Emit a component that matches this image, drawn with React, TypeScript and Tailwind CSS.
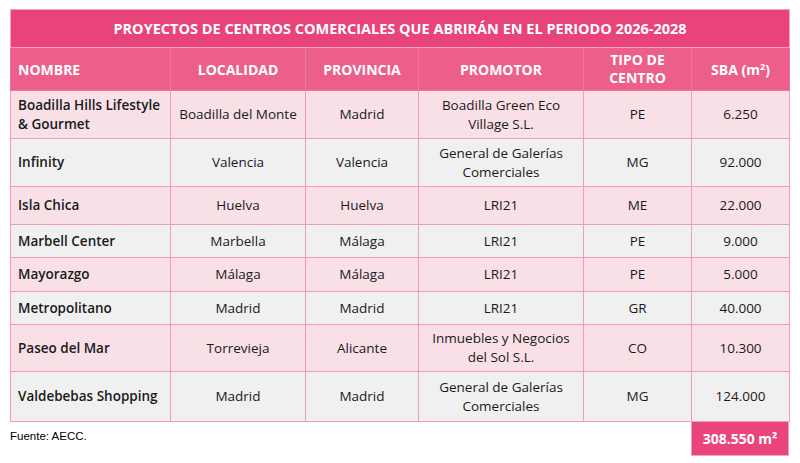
import React from "react";

const rows: { n: React.ReactNode; l: string; p: string; pr: React.ReactNode; t: string; s: string; h: string }[] = [
  { n: <>Boadilla Hills Lifestyle<br />&amp; Gourmet</>, l: "Boadilla del Monte", p: "Madrid", pr: <>Boadilla Green Eco<br />Village S.L.</>, t: "PE", s: "6.250", h: "h-[48px]" },
  { n: "Infinity", l: "Valencia", p: "Valencia", pr: <>General de Galerías<br />Comerciales</>, t: "MG", s: "92.000", h: "h-[48px]" },
  { n: "Isla Chica", l: "Huelva", p: "Huelva", pr: "LRI21", t: "ME", s: "22.000", h: "h-[38px]" },
  { n: "Marbell Center", l: "Marbella", p: "Málaga", pr: "LRI21", t: "PE", s: "9.000", h: "h-[33px]" },
  { n: "Mayorazgo", l: "Málaga", p: "Málaga", pr: "LRI21", t: "PE", s: "5.000", h: "h-[34px]" },
  { n: "Metropolitano", l: "Madrid", p: "Madrid", pr: "LRI21", t: "GR", s: "40.000", h: "h-[33px]" },
  { n: "Paseo del Mar", l: "Torrevieja", p: "Alicante", pr: <>Inmuebles y Negocios<br />del Sol S.L.</>, t: "CO", s: "10.300", h: "h-[47px]" },
  { n: "Valdebebas Shopping", l: "Madrid", p: "Madrid", pr: <>General de Galerías<br />Comerciales</>, t: "MG", s: "124.000", h: "h-[50px]" },
];

export default function App() {
  const cell = "border border-[#f39bba] text-center align-middle";
  return (
    <div className="w-[800px] h-[463px] bg-white pt-[9px] pl-[10px]" style={{ fontFamily: '"Open Sans", sans-serif' }}>
      <table className="table-fixed border-collapse w-[779px] text-[13.5px] leading-[19px] text-[#1a1a1a]">
        <colgroup>
          <col className="w-[160px]" />
          <col className="w-[135px]" />
          <col className="w-[113px]" />
          <col className="w-[165px]" />
          <col className="w-[108px]" />
          <col className="w-[98px]" />
        </colgroup>
        <thead>
          <tr className="h-[38px] bg-[#e8447a]">
            <th colSpan={6} className="border border-[#f4a3bf] text-white font-bold text-[14.5px] text-center">
              PROYECTOS DE CENTROS COMERCIALES QUE ABRIRÁN EN EL PERIODO 2026-2028
            </th>
          </tr>
          <tr className="h-[43px] bg-[#ec5f8a] text-white font-bold text-[14px]">
            <th className="border border-[#e9779e] border-t-[#e8447a] text-left pl-[7px]">NOMBRE</th>
            <th className="border border-[#e9779e] border-t-[#e8447a]">LOCALIDAD</th>
            <th className="border border-[#e9779e] border-t-[#e8447a]">PROVINCIA</th>
            <th className="border border-[#e9779e] border-t-[#e8447a]">PROMOTOR</th>
            <th className="border border-[#e9779e] border-t-[#e8447a] leading-[18px]">TIPO DE<br />CENTRO</th>
            <th className="border border-[#e9779e] border-t-[#e8447a]">SBA (m<sup className="text-[9px]">2</sup>)</th>
          </tr>
        </thead>
        <tbody>
          {rows.map((r, i) => (
            <tr key={i} className={`${r.h} ${i % 2 === 0 ? "bg-[#f9e0e7]" : "bg-[#f0f0f0]"}`}>
              <td className="border border-[#f39bba] text-left pl-[7px] font-semibold align-middle">{r.n}</td>
              <td className={cell}>{r.l}</td>
              <td className={cell}>{r.p}</td>
              <td className={cell}>{r.pr}</td>
              <td className={cell}>{r.t}</td>
              <td className={cell}>{r.s}</td>
            </tr>
          ))}
        </tbody>
      </table>
      <div className="flex w-[779px] items-start justify-between">
        <div className="pt-[6px] text-[11.5px] text-black" style={{ fontFamily: '"Liberation Sans", Arial, sans-serif' }}>
          Fuente: AECC.
        </div>
        <div className="w-[98px] h-[34px] bg-[#e9457b] border border-[#f4a3bf] border-t-0 flex items-center justify-center text-white font-bold text-[14px]">
          308.550 m²
        </div>
      </div>
    </div>
  );
}
